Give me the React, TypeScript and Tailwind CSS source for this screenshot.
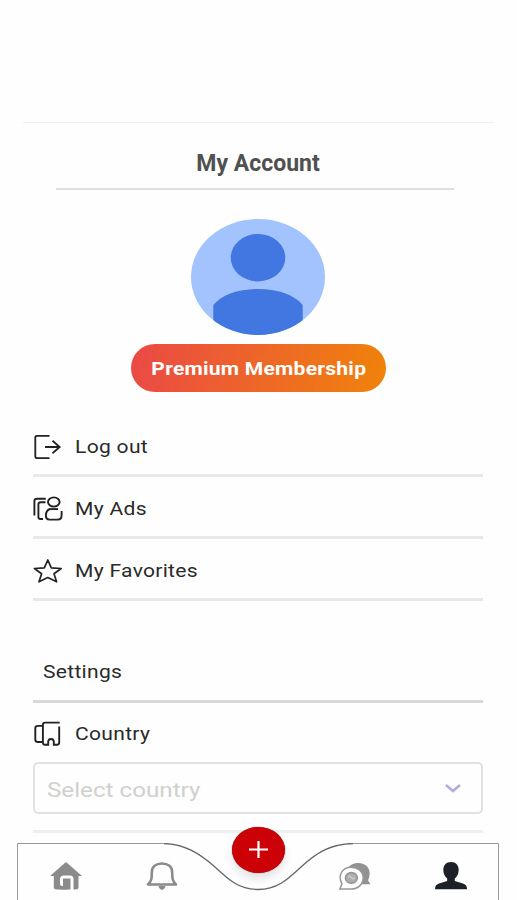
import React from "react";

const LogoutIcon = () => (
  <svg width="28" height="28" viewBox="0 0 28 28" fill="none" stroke="#222" strokeWidth="1.8">
    <path d="M16.5 2.8H4.2C2.8 2.8 2.3 3.4 2.3 4.6V23.2C2.3 24.5 2.9 25.1 4.2 25.1H16.5" />
    <path d="M12 14H26.5M19.5 7.8L26.7 14L19.5 20.2" />
  </svg>
);

const AdsIcon = () => (
  <svg width="30" height="28" viewBox="0 0 30 28" fill="none" stroke="#222" strokeWidth="1.9">
    <path d="M12.8 3.8H4Q1.4 3.8 1.4 6V20.5" />
    <path d="M12.5 7.3H8Q5.4 7.3 5.4 9.5V22Q5.4 24 7.5 24H10" />
    <ellipse cx="20.8" cy="7" rx="5.8" ry="4.6" />
    <path d="M17 14C14 15 12.9 17.4 12.9 20.6C12.9 23.4 14 24.6 16.5 24.6H25C27.6 24.6 28.6 23.4 28.6 20.6V16" />
    <path d="M16.5 14.1H25" />
  </svg>
);

const StarIcon = () => (
  <svg width="30" height="28" viewBox="0 0 30 28" fill="none" stroke="#222" strokeWidth="1.7" strokeLinejoin="round">
    <path d="M14.8 3L18.3 10.8L28.2 11.5L21 16.8L23.6 24.8L14.8 20.6L6 24.8L8.6 16.8L1.4 11.5L11.3 10.8Z" />
  </svg>
);

const CountryIcon = () => (
  <svg width="28" height="28" viewBox="0 0 28 28" fill="none" stroke="#222" strokeWidth="1.9">
    <path d="M9.5 5.9H5Q2.3 5.9 2.3 8.2V19.7Q2.3 22 5 22H9.5" />
    <path d="M26.7 2.6H12Q9.9 2.6 9.9 4.8V22.6Q9.9 24.8 12 24.8H15.2V21.5Q15.5 19 18 19T20.8 21.5V24.8H24Q26.2 24.8 26.2 22.6V6.5" />
  </svg>
);

const HomeIcon = () => (
  <svg width="34" height="30" viewBox="0 0 34 30" fill="#8b8b8b">
    <path d="M17 1L33 15H29.5V26Q29.5 28.5 27 28.5H24.5V18Q24.5 14.5 21 14.5H15Q11 14.5 11 18V23Q11 25 13 25H15V20H18.5V28.5H7.5Q4.8 28.5 4.8 26V15H1Z" />
    <path d="M14 17.5H21.5V28.5H11.5Q10.5 25 14 25Z" />
  </svg>
);

const BellIcon = () => (
  <svg width="34" height="30" viewBox="0 0 34 30" fill="none" stroke="#8b8b8b" strokeWidth="2.6" strokeLinejoin="round">
    <path d="M3 23.5C6.8 20 6.8 17 6.8 11.5C6.8 5.5 11 2.5 17 2.5S27.2 5.5 27.2 11.5C27.2 17 27.2 20 31 23.5Z" />
    <path d="M13.5 25H20.5Q19.5 28.8 17 28.8T13.5 25Z" fill="#8b8b8b" stroke="none" />
  </svg>
);

const ChatIcon = () => (
  <svg width="34" height="30" viewBox="0 0 34 30">
    <path d="M20 2C27 2 31.6 6.3 31.6 12C31.6 15 31 17 30 19.3L32.5 23.2H22L10 7C12 3.7 16 2 20 2Z" fill="#929292" />
    <path d="M1.8 28L4 22.8C-.5 14.8 4 6.2 13 6.2C20 6.2 25.2 10.8 25.2 17S20 28 13 28Z" fill="#fefefe" stroke="#989898" strokeWidth="1.5" />
    <ellipse cx="13.4" cy="16.9" rx="6" ry="5.4" fill="#adadad" stroke="#949494" strokeWidth="1.4" />
    <path d="M10 17L11.5 15L15 18L17 16.5" fill="none" stroke="#cfcfcf" strokeWidth="1.1" />
  </svg>
);

const UserIcon = () => (
  <svg width="34" height="30" viewBox="0 0 34 30" fill="#1b2127">
    <path d="M17 1C22 1 24.7 4.4 24.7 8.8C24.7 13 23 16 20.8 17.5V20L29 22.5C32 23.5 33 25.2 33 28.3H1C1 25.2 2 23.5 5 22.5L13.2 20V17.5C11 16 9.3 13 9.3 8.8C9.3 4.4 12 1 17 1Z" />
  </svg>
);

const menu = [
  { id: 0, title: "Log out", icon: <LogoutIcon /> },
  { id: 1, title: "My Ads", icon: <AdsIcon /> },
  { id: 2, title: "My Favorites", icon: <StarIcon /> },
];

const Label = ({ children }: { children: React.ReactNode }) => (
  <span className="inline-block origin-left scale-x-[1.17] whitespace-nowrap text-[18px] leading-6 tracking-[0.25px] text-[#2a2a2a]">
    {children}
  </span>
);

const BottomNav = () => {
  return (
    <nav className="relative mt-[10px] ml-[17px] h-[58px] w-[482px]">
      <svg className="absolute inset-0" width="482" height="58" viewBox="0 0 482 58" fill="none">
        <path d="M0.5 58V0.5H147M336 0.5H481.5V58" stroke="#999" />
        <path
          d="M147 0.5C167 1 182 10 198 24C212 37 222 46.5 241 46.5S270 37 284 24C300 9 314 1 336 0.5"
          stroke="#666"
          strokeWidth="1.3"
        />
      </svg>
      <div className="relative flex h-full items-start justify-between pt-[18px] pr-[31px] pl-8">
        <div className="flex gap-[62px]">
          <HomeIcon />
          <BellIcon />
        </div>
        <div className="flex gap-[62px]">
          <ChatIcon />
          <UserIcon />
        </div>
      </div>
      <button className="absolute -top-4 left-[215px] flex h-[46px] w-[53px] items-center justify-center rounded-[50%] bg-[#cc0007] shadow-[0_6px_8px_#0000001c,0_0_1px_#333]">
        <svg width="20" height="18" viewBox="0 0 20 18" stroke="#fff" strokeWidth="2.2">
          <path d="M9.5 0V17M0 8.5H19" />
        </svg>
      </button>
    </nav>
  );
};

const App = () => {
  return (
    <div className="h-[900px] w-[517px] overflow-hidden bg-[#fefefe] font-['Roboto',sans-serif]">
      <header className="mx-[23px] h-[123px] border-b border-[#efefef]" />

      <div className="mr-[63px] ml-14 flex h-[67px] items-center justify-center border-b-2 border-[#e0e0e0] pt-[17px] pl-[6px]">
        <h1 className="text-[23px] leading-7 font-bold whitespace-nowrap text-[#505050]">My Account</h1>
      </div>

      <div className="mt-[29px] mr-px flex flex-col items-center">
        <svg width="134" height="116" viewBox="0 0 134 116">
          <clipPath id="avatar">
            <ellipse cx="67" cy="58" rx="67" ry="58" />
          </clipPath>
          <g clipPath="url(#avatar)">
            <rect width="134" height="116" fill="#a2c3ff" />
            <ellipse cx="67" cy="38.7" rx="27.3" ry="23.7" fill="#4276e0" />
            <path d="M22.3 116V86C31 75.5 48 70 67 70S103 75.5 111.7 86V116Z" fill="#4276e0" />
          </g>
        </svg>
        <button className="mt-[9px] ml-px flex h-12 w-[255px] items-center justify-center rounded-full bg-linear-[100deg,#eb4946,#f0830a] pt-px text-white">
          <span className="scale-x-[1.11] text-[19px] leading-6 font-bold tracking-[0.2px] whitespace-nowrap">
            Premium Membership
          </span>
        </button>
      </div>

      <main className="mr-[34px] ml-[33px] pt-[23px]">
        {menu.map((item) => {
          return (
            <div key={item.id} className="flex h-[62px] items-center border-b-[3px] border-[#e8e8e8] pt-[5px]">
              <div className="w-[42px] pb-px">{item.icon}</div>
              <Label>{item.title}</Label>
            </div>
          );
        })}

        <div className="mt-10 flex h-[62px] items-center border-b-[3px] border-[#d9d9d9] pt-[2px] pl-[10px]">
          <Label>Settings</Label>
        </div>

        <div className="flex h-[59px] items-center pt-[2px]">
          <div className="w-[42px]">
            <CountryIcon />
          </div>
          <Label>Country</Label>
        </div>
        <div className="flex h-[52px] items-center justify-between rounded-[5px] border-2 border-[#e2e2e2] pt-[3px] pr-5 pl-3">
          <span className="origin-left scale-x-[1.21] text-[20px] leading-6 whitespace-nowrap text-[#d0d0d0]">
            Select country
          </span>
          <svg className="mb-[3px]" width="16" height="9" viewBox="0 0 16 9" fill="none" stroke="#b4abdd" strokeWidth="2.5">
            <path d="M1 1L8 7L15 1" />
          </svg>
        </div>
        <div className="mt-4 h-[3px] bg-[#efefef]" />
      </main>

      <BottomNav />
    </div>
  );
};

export default App;
